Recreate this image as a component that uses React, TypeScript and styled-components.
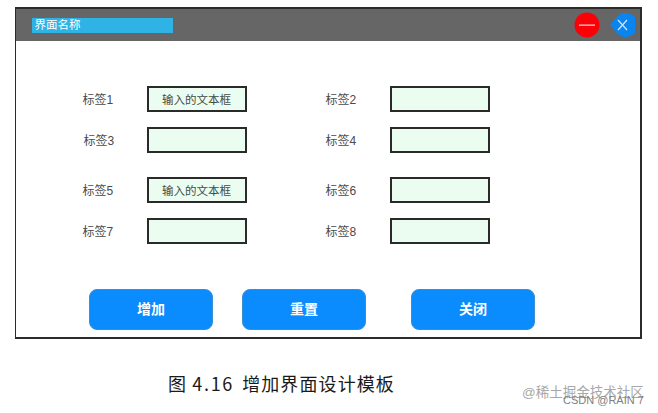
import React from "react";
import styled, { createGlobalStyle } from "styled-components";

const GlobalStyle = createGlobalStyle`
  html, body {
    margin: 0;
    padding: 0;
    background: #fff;
  }
  body {
    font-family: "Liberation Sans", "Noto Sans CJK SC", sans-serif;
    overflow: hidden;
  }
`;

const Page = styled.div`
  position: relative;
  width: 658px;
  height: 413px;
  padding: 7px 0 0 15px;
  box-sizing: border-box;
`;

const Window = styled.div`
  width: 627px;
  height: 332px;
  box-sizing: border-box;
  border: 2px solid #2b2b2b;
  border-left-width: 1.5px;
  display: flex;
  flex-direction: column;
`;

const TitleBar = styled.div`
  height: 32px;
  background: #666666;
  display: flex;
  align-items: center;
  padding: 0 5px 0 15.5px;
  flex: none;
`;

const TitleText = styled.div`
  width: 141px;
  height: 15px;
  background: #2fb2e4;
  color: #fff;
  font-size: 11.5px;
  line-height: 15px;
  padding-left: 3px;
  box-sizing: border-box;
  margin-right: auto;
`;

const ControlIcon = styled.svg<{ $gap?: number }>`
  display: block;
  flex: none;
  margin-left: ${(props) => props.$gap || 0}px;
`;

const Form = styled.div`
  display: flex;
  flex-direction: column;
  padding: 45px 0 0 66.5px;
`;

const RowGroup = styled.div<{ $top?: number }>`
  display: flex;
  flex-direction: column;
  gap: 15px;
  margin-top: ${(props) => props.$top || 0}px;
`;

const Row = styled.div`
  display: flex;
  align-items: center;
`;

const Label = styled.div<{ $shift?: number }>`
  width: 64px;
  font-size: 12px;
  line-height: 16px;
  color: #4a4a4a;
  padding-top: 1px;
  padding-left: ${(props) => props.$shift || 0}px;
  box-sizing: border-box;
`;

const RightLabel = styled(Label)`
  margin-left: 79px;
`;

const Field = styled.div`
  width: 100px;
  height: 26px;
  box-sizing: border-box;
  border: 2px solid #2a2a2a;
  background: #ebfdf1;
  font-size: 11.5px;
  line-height: 24px;
  color: #444b46;
  text-align: center;
`;

const Actions = styled.div`
  display: flex;
  margin-top: 45px;
  padding-left: 73px;
`;

const ActionButton = styled.div<{ $gap?: number }>`
  width: 124px;
  height: 41px;
  margin-left: ${(props) => props.$gap || 0}px;
  box-sizing: border-box;
  border: 1px solid #3b8fd0;
  border-radius: 8px;
  background: #0a8cff;
  color: #fff;
  font-size: 14px;
  font-weight: 700;
  line-height: 39px;
  text-align: center;
`;

const Caption = styled.div`
  margin: 32px 0 0 153px;
  font-size: 18px;
  line-height: 24px;
  color: #1a1a1a;
  font-family: "Noto Sans CJK SC", sans-serif;
  letter-spacing: 1.1px;
  white-space: pre;
`;

const CaptionNumber = styled.span`
  letter-spacing: 1.7px;
  margin-right: 3px;
`;

const Watermark = styled.div<{ $left: number; $top: number; $size: number; $color: string }>`
  position: absolute;
  left: ${(props) => props.$left}px;
  top: ${(props) => props.$top}px;
  font-size: ${(props) => props.$size}px;
  line-height: 16px;
  color: ${(props) => props.$color};
  white-space: nowrap;
`;

const rows = [
  [
    { left: "标签1", right: "标签2", text: "输入的文本框" },
    { left: "标签3", right: "标签4", text: "", shift: 1 },
  ],
  [
    { left: "标签5", right: "标签6", text: "输入的文本框" },
    { left: "标签7", right: "标签8", text: "" },
  ],
];

const App = () => {
  return (
    <Page>
      <GlobalStyle />
      <Window>
        <TitleBar>
          <TitleText>界面名称</TitleText>
          <ControlIcon width="26" height="26" viewBox="0 0 26 26">
            <circle cx="13" cy="13" r="12.5" fill="#fb0007" />
            <rect x="5" y="12.4" width="16" height="1.5" fill="#ffb0b0" />
          </ControlIcon>
          <ControlIcon width="26" height="26" viewBox="0 0 26 26" $gap={9}>
            <path d="M1 13 L7 6 A12 12 0 1 1 7 20 Z" fill="#0a84ee" />
            <path d="M9 8 L18 18 M18 8 L9 18" stroke="#cfe6ff" strokeWidth="1.2" fill="none" />
          </ControlIcon>
        </TitleBar>
        <Form>
          {rows.map((group, i) => (
            <RowGroup key={i} $top={i === 0 ? 0 : 24}>
              {group.map((row) => (
                <Row key={row.left}>
                  <Label $shift={row.shift}>{row.left}</Label>
                  <Field>{row.text}</Field>
                  <RightLabel>{row.right}</RightLabel>
                  <Field />
                </Row>
              ))}
            </RowGroup>
          ))}
        </Form>
        <Actions>
          <ActionButton>增加</ActionButton>
          <ActionButton $gap={29}>重置</ActionButton>
          <ActionButton $gap={45}>关闭</ActionButton>
        </Actions>
      </Window>
      <Caption>
        图 <CaptionNumber>4.16</CaptionNumber> 增加界面设计模板
      </Caption>
      <Watermark $left={522} $top={385} $size={13.5} $color="#a8a8a8">@稀土掘金技术社区</Watermark>
      <Watermark $left={563} $top={392} $size={11} $color="#808080">CSDN @RAIN 7</Watermark>
    </Page>
  );
};

export default App;
